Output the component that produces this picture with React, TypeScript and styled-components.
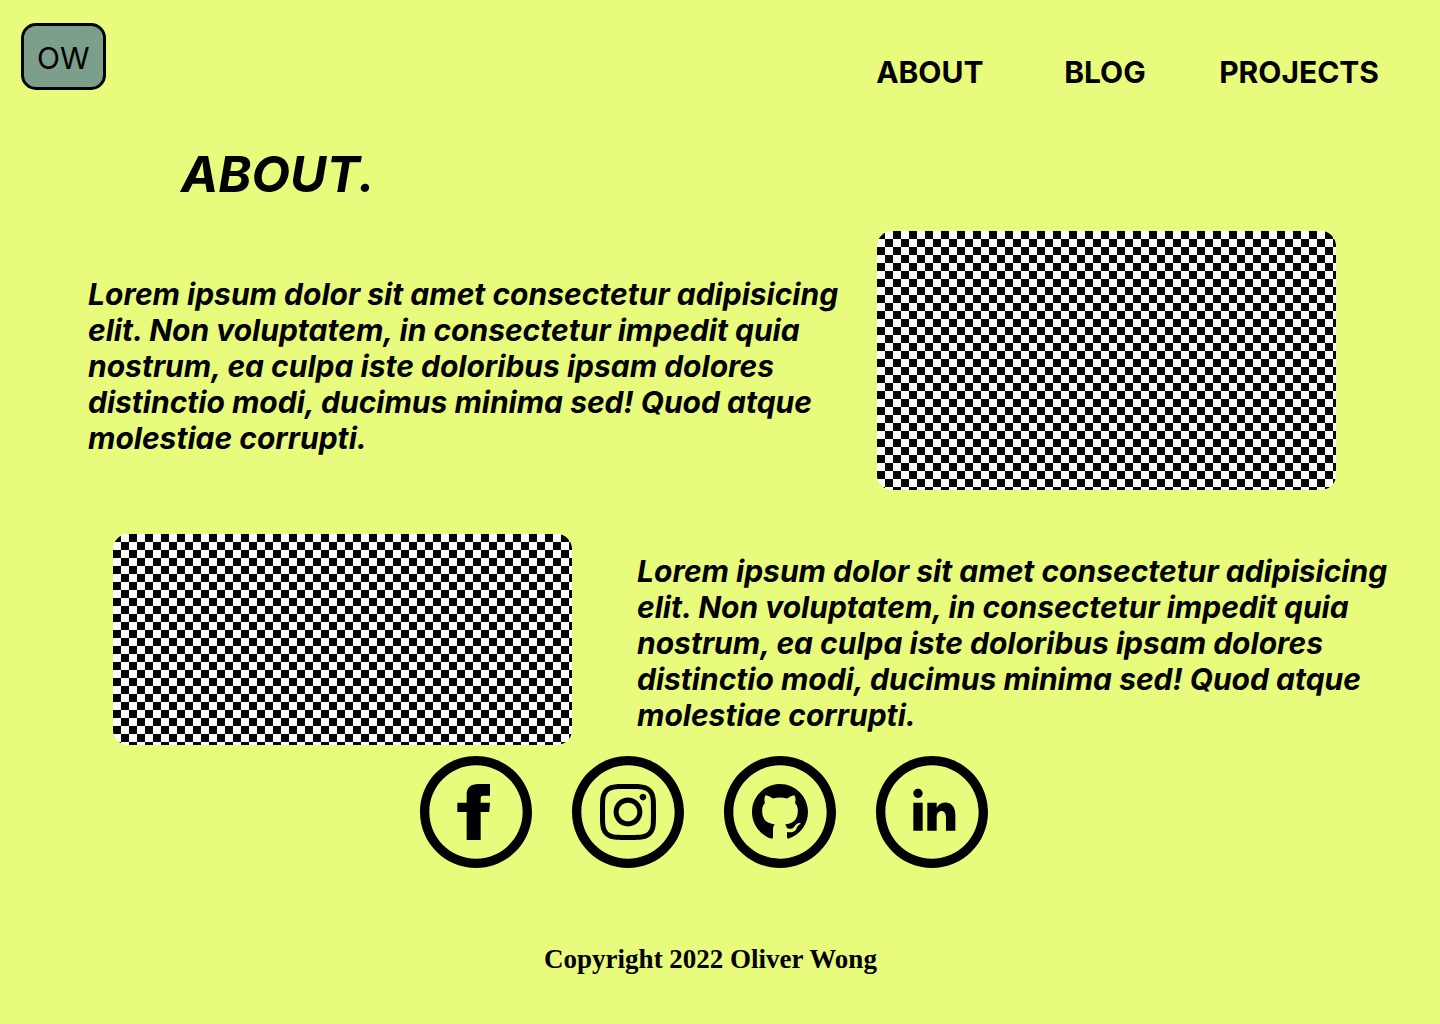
import React from 'react';
import styled, { createGlobalStyle } from 'styled-components';

const GlobalStyle = createGlobalStyle`
  *, *::before, *::after { box-sizing: border-box; }
  body {
    margin: 0;
    background: #e8fb7c;
    color: #000;
    font-family: Inter, 'Liberation Sans', sans-serif;
    font-size: 30px;
    line-height: 36px;
  }
`;

const Header = styled.header`
  display: flex;
  justify-content: space-between;
  align-items: flex-start;
  padding: 23px 61px 0 21px;
`;

const Logo = styled.a`
  padding: 14px 13px 11px;
  border: 3px solid #000;
  border-radius: 15px;
  background: #7c9f8b;
  color: inherit;
  font-weight: 400;
  text-decoration: none;
`;

const Nav = styled.nav`
  display: grid;
  grid-template-columns: 188px 155px auto;
  padding-top: 31px;
`;

const NavLink = styled.a`
  color: inherit;
  font-weight: 700;
  text-decoration: none;
`;

const Title = styled.h1`
  margin: 54px 0 0 181px;
  font-size: 50px;
  line-height: 60px;
  font-style: italic;
  font-weight: 700;
`;

const Section = styled.section<{ $gap: number; $space: string }>`
  display: flex;
  align-items: flex-start;
  gap: ${(p) => p.$gap}px;
  padding: ${(p) => p.$space};
`;

const Copy = styled.p<{ $top: number }>`
  flex: 1;
  margin: 0;
  padding-top: ${(p) => p.$top}px;
  font-style: italic;
  font-weight: 700;
`;

const Picture = styled.div<{ $height: number }>`
  flex: 0 0 459px;
  height: ${(p) => p.$height}px;
  border-radius: 15px;
  background: repeating-conic-gradient(#fff 0 25%, #000 0 50%) 0 0 / 16px 16px;
`;

const Socials = styled.div`
  display: flex;
  justify-content: center;
  gap: 40px;
  padding: 11px 32px 0 0;
`;

const SocialLink = styled.a`
  color: inherit;
  svg { display: block; width: 112px; height: 112px; fill: currentColor; }
`;

const Footer = styled.footer`
  padding: 73px 19px 46px 0;
  text-align: center;
  font-family: 'Liberation Serif', serif;
  font-size: 27px;
  font-weight: 700;
`;

const lorem =
  'Lorem ipsum dolor sit amet consectetur adipisicing elit. Non voluptatem, in consectetur impedit quia nostrum, ea culpa iste doloribus ipsam dolores distinctio modi, ducimus minima sed! Quod atque molestiae corrupti.';

const ring =
  'M12 2c5.514 0 10 4.486 10 10s-4.486 10-10 10-10-4.486-10-10 4.486-10 10-10zm0-2c-6.627 0-12 5.373-12 12s5.373 12 12 12 12-5.373 12-12-5.373-12-12-12z';

const socials = [
  {
    name: 'Facebook',
    transform: undefined,
    path: 'M10 10h-2v2h2v6h3v-6h1.82l.18-2h-2v-.833c0-.478.096-.667.558-.667h1.442v-2.5h-2.404c-1.798 0-2.596.792-2.596 2.308v1.692z',
  },
  {
    name: 'Instagram',
    transform: 'translate(6 6) scale(.5)',
    path: 'M12 2.163c3.204 0 3.584.012 4.85.07 3.252.148 4.771 1.691 4.919 4.919.058 1.265.069 1.645.069 4.849 0 3.205-.012 3.584-.069 4.849-.149 3.225-1.664 4.771-4.919 4.919-1.266.058-1.644.07-4.85.07-3.204 0-3.584-.012-4.849-.07-3.26-.149-4.771-1.699-4.919-4.92-.058-1.265-.07-1.644-.07-4.849 0-3.204.013-3.583.07-4.849.149-3.227 1.664-4.771 4.919-4.919 1.266-.057 1.645-.069 4.849-.069zm0-2.163c-3.259 0-3.667.014-4.947.072-4.358.2-6.78 2.618-6.98 6.98-.059 1.281-.073 1.689-.073 4.948 0 3.259.014 3.668.072 4.948.2 4.358 2.618 6.78 6.98 6.98 1.281.058 1.689.072 4.948.072 3.259 0 3.668-.014 4.948-.072 4.354-.2 6.782-2.618 6.979-6.98.059-1.28.073-1.689.073-4.948 0-3.259-.014-3.667-.072-4.947-.196-4.354-2.617-6.78-6.979-6.98-1.281-.059-1.69-.073-4.949-.073zm0 5.838c-3.403 0-6.162 2.759-6.162 6.162s2.759 6.163 6.162 6.163 6.162-2.759 6.162-6.163c0-3.403-2.759-6.162-6.162-6.162zm0 10.162c-2.209 0-4-1.79-4-4 0-2.209 1.791-4 4-4s4 1.791 4 4c0 2.21-1.791 4-4 4zm6.406-11.845c-.796 0-1.441.645-1.441 1.44s.645 1.44 1.441 1.44c.795 0 1.439-.645 1.439-1.44s-.644-1.44-1.439-1.44z',
  },
  {
    name: 'GitHub',
    transform: 'translate(18 6) scale(-.5 .5)',
    path: 'M12 0c-6.626 0-12 5.373-12 12 0 5.302 3.438 9.8 8.207 11.387.599.111.793-.261.793-.577v-2.234c-3.338.726-4.033-1.416-4.033-1.416-.546-1.387-1.333-1.756-1.333-1.756-1.089-.745.083-.729.083-.729 1.205.084 1.839 1.237 1.839 1.237 1.07 1.834 2.807 1.304 3.492.997.107-.775.418-1.305.762-1.604-2.665-.305-5.467-1.334-5.467-5.931 0-1.311.469-2.381 1.236-3.221-.124-.303-.535-1.524.117-3.176 0 0 1.008-.322 3.301 1.23.957-.266 1.983-.399 3.003-.404 1.02.005 2.047.138 3.006.404 2.291-1.552 3.297-1.23 3.297-1.23.653 1.653.242 2.874.118 3.176.77.84 1.235 1.911 1.235 3.221 0 4.609-2.807 5.624-5.479 5.921.43.372.823 1.102.823 2.222v3.293c0 .319.192.694.801.576 4.765-1.589 8.199-6.086 8.199-11.386 0-6.627-5.373-12-12-12z',
  },
  {
    name: 'LinkedIn',
    transform: undefined,
    path: 'M10 8c0 .557-.447 1.008-1 1.008s-1-.45-1-1.008c0-.557.447-1.008 1-1.008s1 .452 1 1.008zm0 2h-2v6h2v-6zm3 0h-2v6h2v-2.861c0-1.722 2.002-1.881 2.002 0v2.861h1.998v-3.359c0-3.284-3.128-3.164-4-1.548v-1.093z',
  },
];

export default function App() {
  return (
    <>
      <GlobalStyle />
      <Header>
        <Logo href="#home">OW</Logo>
        <Nav>
          <NavLink href="#about">ABOUT</NavLink>
          <NavLink href="#blog">BLOG</NavLink>
          <NavLink href="#projects">PROJECTS</NavLink>
        </Nav>
      </Header>
      <main>
        <Title>ABOUT.</Title>
        <Section $gap={30} $space="27px 104px 0 88px">
          <Copy $top={45}>{lorem}</Copy>
          <Picture $height={259} />
        </Section>
        <Section $gap={65} $space="44px 44px 0 113px">
          <Picture $height={211} />
          <Copy $top={19}>{lorem}</Copy>
        </Section>
      </main>
      <Socials>
        {socials.map((s) => (
          <SocialLink key={s.name} href={'#' + s.name.toLowerCase()} aria-label={s.name}>
            <svg viewBox="0 0 24 24" aria-hidden="true">
              <path d={ring} />
              <path d={s.path} transform={s.transform} />
            </svg>
          </SocialLink>
        ))}
      </Socials>
      <Footer>Copyright 2022 Oliver Wong</Footer>
    </>
  );
}
